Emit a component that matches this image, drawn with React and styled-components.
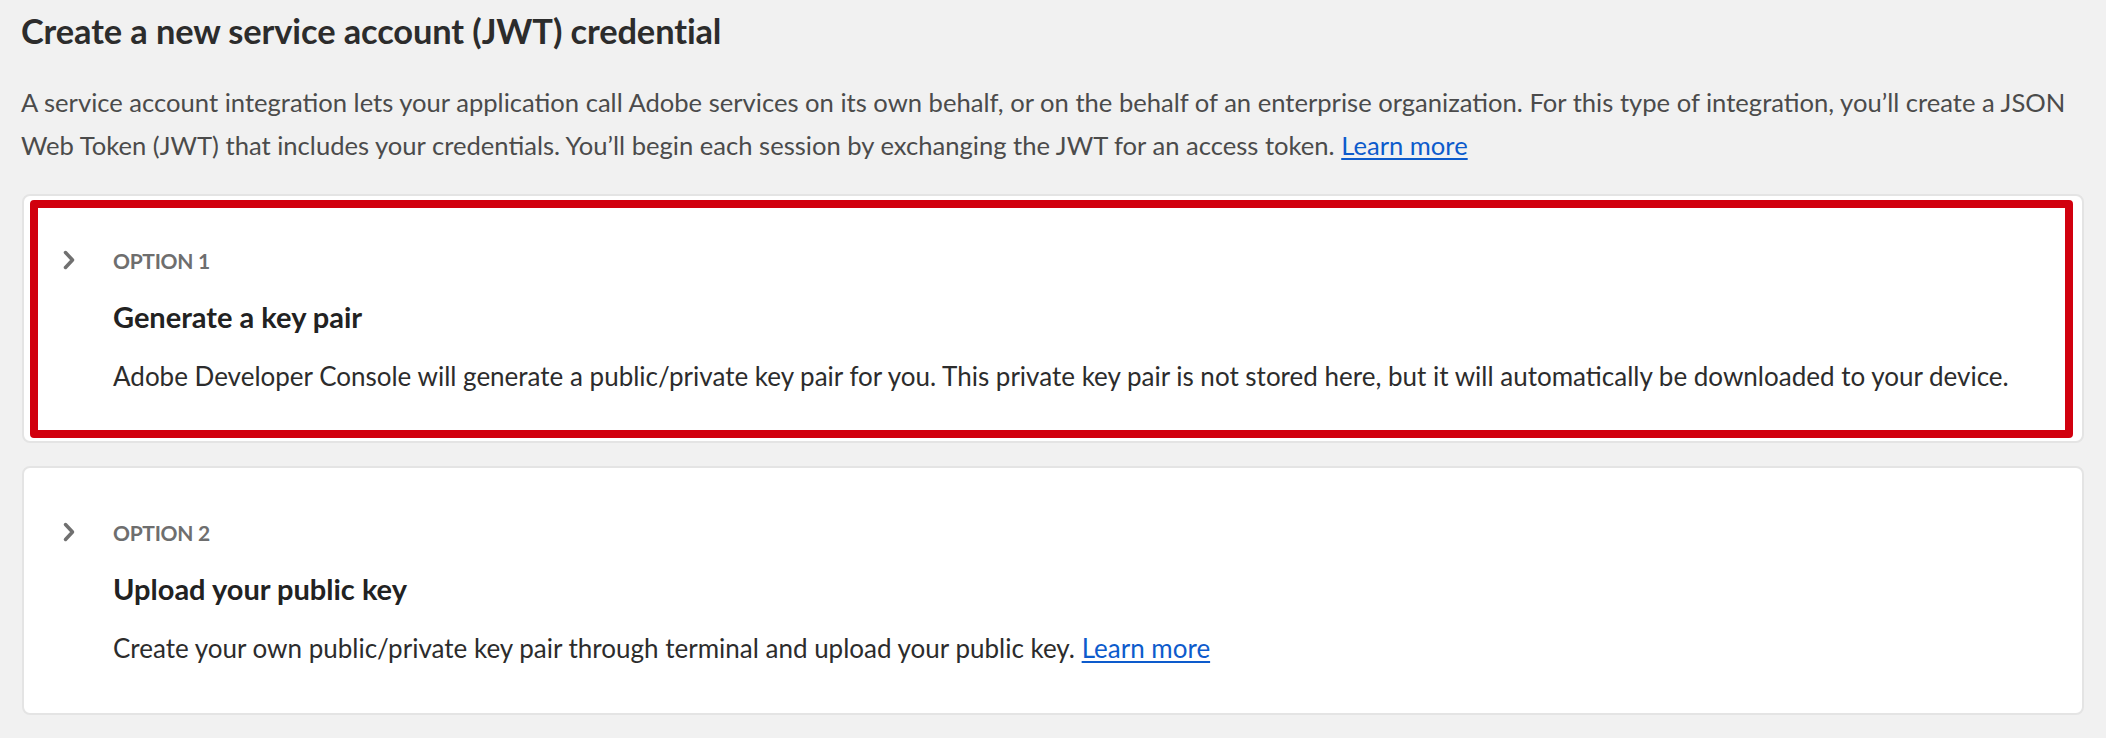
import styled, { createGlobalStyle } from "styled-components";

const GlobalStyle = createGlobalStyle`
  html, body {
    margin: 0;
    padding: 0;
    background: #f1f1f1;
  }
  body {
    font-family: Lato, "Noto Sans", "Liberation Sans", sans-serif;
    -webkit-font-smoothing: antialiased;
  }
`;

const options = [
  {
    id: 1,
    label: "OPTION 1",
    title: "Generate a key pair",
    text: "Adobe Developer Console will generate a public/private key pair for you. This private key pair is not stored here, but it will automatically be downloaded to your device.",
    highlighted: true,
  },
  {
    id: 2,
    label: "OPTION 2",
    title: "Upload your public key",
    text: "Create your own public/private key pair through terminal and upload your public key.",
    link: true,
  },
];

const Chevron = () => (
  <S.ChevronIcon width="14" height="20" viewBox="0 0 14 20" aria-hidden="true">
    <path d="M3.5 2.5 L10.5 10 L3.5 17.5" fill="none" stroke="#707070" strokeWidth="3.5" strokeLinecap="round" strokeLinejoin="round" />
  </S.ChevronIcon>
);

const OptionCard = ({ label, title, text, link, highlighted }) => (
  <S.Card>
    {highlighted && <S.Highlight />}
    <S.CardHeader>
      <Chevron />
      <S.Label>{label}</S.Label>
    </S.CardHeader>
    <S.CardBody>
      <S.CardTitle>{title}</S.CardTitle>
      <S.CardText>
        {text}
        {link && (
          <>
            {" "}
            <S.Link href="#">Learn more</S.Link>
          </>
        )}
      </S.CardText>
    </S.CardBody>
  </S.Card>
);

const App = () => {
  return (
    <>
      <GlobalStyle />
      <S.Page>
        <S.Heading>Create a new service account (JWT) credential</S.Heading>
        <S.Intro>
          A service account integration lets your application call Adobe services on its own behalf, or on the behalf of an enterprise organization. For this type of integration, you’ll create a JSON Web Token (JWT) that includes your credentials. You’ll begin each session by exchanging the JWT for an access token.{" "}
          <S.Link href="#">Learn more</S.Link>
        </S.Intro>
        <S.Options>
          {options.map((o) => (
            <OptionCard key={o.id} {...o} />
          ))}
        </S.Options>
      </S.Page>
    </>
  );
};

export default App;

const S = {
  Page: styled.div`
    display: flex;
    flex-direction: column;
    padding: 9px 22px 0 21px;
  `,
  Heading: styled.h1`
    margin: 0;
    font-size: 34.4px;
    line-height: 44px;
    font-weight: 700;
    color: #2c2c2c;
    letter-spacing: -0.1px;
  `,
  Intro: styled.p`
    margin: 28px 0 0;
    font-size: 25.6px;
    line-height: 43px;
    color: #4b4b4b;
  `,
  Link: styled.a`
    color: #0d5bcc;
    text-decoration: underline;
    text-underline-offset: 3px;
  `,
  Options: styled.div`
    display: flex;
    flex-direction: column;
    gap: 23px;
    margin: 27px 0 0 1px;
  `,
  Card: styled.div`
    position: relative;
    display: flex;
    flex-direction: column;
    padding: 51px 40px 49px 38px;
    background: #ffffff;
    border: 2px solid #e4e4e4;
    border-radius: 8px;
  `,
  Highlight: styled.div`
    position: absolute;
    top: 4px;
    left: 6px;
    right: 9px;
    bottom: 3px;
    border: 8px solid #d1000e;
    border-radius: 4px;
    pointer-events: none;
  `,
  CardHeader: styled.div`
    display: flex;
    align-items: center;
    height: 28px;
  `,
  ChevronIcon: styled.svg`
    flex: none;
    width: 14px;
    height: 20px;
    margin-right: 37px;
    margin-top: -3px;
  `,
  Label: styled.span`
    font-size: 21px;
    line-height: 28px;
    font-weight: 700;
    color: #6e6e6e;
    letter-spacing: -0.3px;
  `,
  CardBody: styled.div`
    display: flex;
    flex-direction: column;
    gap: 25px;
    margin-top: 24px;
    padding-left: 51px;
  `,
  CardTitle: styled.h2`
    margin: 0;
    font-size: 29px;
    line-height: 36px;
    font-weight: 700;
    color: #222222;
  `,
  CardText: styled.p`
    margin: 0;
    font-size: 26px;
    line-height: 32px;
    color: #2c2c2c;
  `,
};
